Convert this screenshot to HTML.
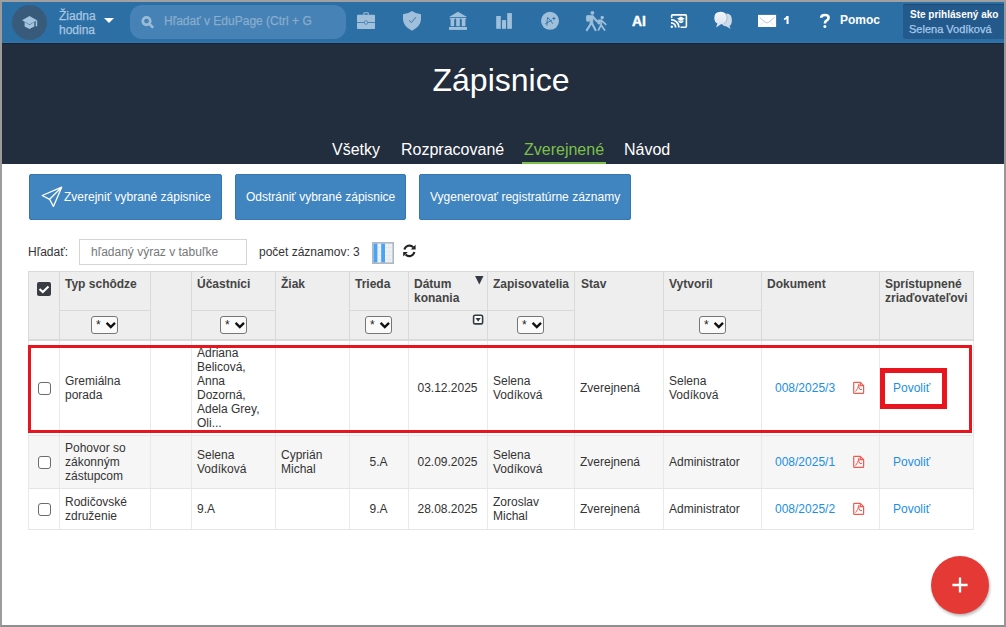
<!DOCTYPE html>
<html><head><meta charset="utf-8">
<style>
*{box-sizing:border-box;margin:0;padding:0}
html,body{width:1006px;height:627px;overflow:hidden;background:#fff}
body{font-family:"Liberation Sans",sans-serif;position:relative;color:#333}
.frame{position:absolute;left:0;top:0;width:1006px;height:627px;border:2px solid #a0a0a0;border-left-color:#9c9c9c;border-right-color:#979797;border-bottom-color:#8f8f8f;z-index:50;pointer-events:none}
.a{position:absolute}
#nav{left:2px;top:2px;width:1002px;height:41px;background:#2c6fa5}
#hdr{left:2px;top:43px;width:1002px;height:121px;background:#222d3d}
.navtxt{color:#a9c6e0;font-size:12px;line-height:14px;white-space:nowrap;-webkit-text-stroke:0.25px currentColor}
.title{left:-2px;width:1006px;top:60px;text-align:center;color:#fff;font-size:32px;line-height:40px}
.tab{top:140px;color:#fff;font-size:16px;line-height:20px;white-space:nowrap}
.btn{top:174px;height:46px;background:#4085c0;border:1px solid #3577b0;border-radius:2px;color:#fff;font-size:12px;line-height:44px;padding:0 10px;white-space:nowrap}
.t12{font-size:12px;line-height:14px;white-space:nowrap}
svg{position:absolute;overflow:visible}
/* table */
.hb{background:#eeeeee}
.vl{position:absolute;width:1px;background:#d9d9d9}
.hl{position:absolute;height:1px;background:#d9d9d9}
.vlb{position:absolute;width:1px;background:#e9e9e9}
.hlb{position:absolute;height:1px;background:#e6e6e6}
.th{position:absolute;font-size:12px;line-height:14px;font-weight:bold;color:#444;padding:5px 6px}
.sel{position:absolute;top:316px;width:27px;height:18px;border:1px solid #767676;border-radius:3px;background:#fafafa}
.sel i{position:absolute;left:4px;top:1px;font-style:normal;font-size:12px;line-height:14px;color:#222}
.td{position:absolute;font-size:12px;line-height:14px;color:#333;display:flex;align-items:center;padding:0 6px}
.td.c{justify-content:center}
.lnk{color:#1b8fe3}
.cb{position:absolute;left:38px;width:13px;height:13px;border:1.5px solid #6b6b6b;border-radius:3px;background:#fff}
</style></head><body>
<div class="frame"></div>

<!-- NAV -->
<div class="a" id="nav"></div>
<div class="a" style="left:12px;top:5px;width:35px;height:35px;border-radius:50%;background:#385b7b"></div>
<svg style="left:0;top:0" width="1006" height="43">
  <g fill="#a3c3de">
    <polygon points="22,20.3 29.5,16 37,20.3 29.5,24.4"/>
    <path d="M24.6,22.1 L29.5,25.1 L34.3,22.1 V26.4 L29.5,28.9 L24.6,26.4 Z"/>
    <rect x="35.7" y="20.3" width="1.5" height="6"/>
  </g>
</svg>
<div class="a navtxt" style="left:59px;top:9px">Žiadna<br>hodina</div>
<div class="a" style="left:104px;top:18px;width:0;height:0;border-left:5px solid transparent;border-right:5px solid transparent;border-top:5.5px solid #fff"></div>
<div class="a" style="left:130px;top:5px;width:216px;height:34px;border-radius:12px;background:#4682b6"></div>
<svg style="left:0;top:0" width="1006" height="43">
  <circle cx="146.5" cy="21.1" r="3.75" fill="none" stroke="#9bbbd7" stroke-width="2.7"/>
  <line x1="149.6" y1="24.2" x2="152.4" y2="27" stroke="#9bbbd7" stroke-width="2.5" stroke-linecap="round"/>
</svg>
<div class="a navtxt" style="left:164px;top:14px;color:#88adcd">Hľadať v EduPage (Ctrl + G</div>

<svg style="left:0;top:0" width="1006" height="43">
  <g fill="#9fbfdb">
    <!-- briefcase -->
    <path d="M363.3,14.8 V13.6 Q363.3,12.2 364.8,12.2 H367.4 Q368.9,12.2 368.9,13.6 V14.8 H367.7 V13.3 H364.5 V14.8 Z"/>
    <rect x="357" y="14.8" width="18" height="14.2" rx="0.8"/>
    <!-- shield -->
    <path d="M412,10.9 Q407.5,14 403,14.3 V19.5 Q403.5,26.5 412,30.8 Q420.5,26.5 421,19.5 V14.3 Q416.5,14 412,10.9 Z"/>
    <!-- bank -->
    <polygon points="458,11.8 467,16.9 449,16.9"/>
    <rect x="449.8" y="17.8" width="5.2" height="1.4"/><rect x="450.6" y="18.6" width="3.6" height="7.6"/>
    <rect x="455.4" y="17.8" width="5.2" height="1.4"/><rect x="456.2" y="18.6" width="3.6" height="7.6"/>
    <rect x="461" y="17.8" width="5.2" height="1.4"/><rect x="461.8" y="18.6" width="3.6" height="7.6"/>
    <rect x="449" y="27" width="18" height="2.9"/>
    <!-- bars -->
    <rect x="496.2" y="16" width="4.6" height="12.8"/>
    <rect x="502" y="20.1" width="4" height="8.7"/>
    <rect x="507.2" y="13.1" width="4.7" height="15.7"/>
    <!-- A+ -->
    <circle cx="550" cy="20.85" r="9"/>
  </g>
  <polyline points="409.1,20.3 411.4,22.5 415.9,17.2" fill="none" stroke="#3a78ab" stroke-width="1"/>
  <rect x="357" y="22" width="18" height="0.9" fill="#3f7cb0"/>
  <circle cx="366" cy="22.5" r="1.8" fill="#9fbfdb" stroke="#3a78ad" stroke-width="0.7"/>
  <g fill="none" stroke="#2c6fa5" stroke-width="0.9" stroke-linecap="round">
    <path d="M546.9,25.2 Q547,19 547.8,17.4 Q550,20 552.7,23.4"/>
    <path d="M545.6,23.6 L551.6,20.3"/>
    <path d="M553.9,17.3 V19.7 M552.7,18.5 H555.1"/>
  </g>
  <!-- walking -->
  <g fill="#9fbfdb" stroke="#9fbfdb" stroke-linecap="round" stroke-linejoin="round">
    <circle cx="592.4" cy="12.8" r="1.9" stroke="none"/>
    <rect x="586.1" y="14.9" width="3.9" height="6.8" rx="1.7" stroke="none"/>
    <polygon points="589.6,15.4 593.2,15.4 592.7,24.2 590.4,24.2" stroke-width="0.6"/>
    <path d="M590.9,23.8 L586.8,30.1 M592.2,23.8 L595.5,30.1 M592.9,16.8 L596.9,21.3" fill="none" stroke-width="2.1"/>
    <circle cx="602.2" cy="17.5" r="1.7" stroke="none"/>
    <rect x="597.3" y="19.4" width="2.9" height="5" rx="1.3" stroke="none"/>
    <polygon points="599.9,19.7 601.9,19.7 601.7,25.7 600.5,25.7" stroke-width="0.5"/>
    <path d="M600.8,25.5 L598.4,30.1 M601.4,25.5 L604.6,30.1 M601.6,20.7 L605.8,24.4" fill="none" stroke-width="1.7"/>
  </g>
  <!-- cast -->
  <g fill="none" stroke="#fff" stroke-width="1.6">
    <path d="M671.6,17.9 V15.9 Q671.6,14.9 672.6,14.9 H685.4 Q686.4,14.9 686.4,15.9 V26.3 Q686.4,27.2 685.4,27.2 H680.5"/>
  </g>
  <g fill="none" stroke="#fff" stroke-width="1.8">
    <path d="M671,22.9 A4.6,4.6 0 0 1 675.6,27.5"/>
    <path d="M671,19.6 A7.9,7.9 0 0 1 678.9,27.5"/>
  </g>
  <circle cx="671.8" cy="26.7" r="1.2" fill="#fff"/>
  <g fill="#fff">
    <polygon points="677.1,18.7 680.9,16.5 684.7,18.7 680.9,20.9"/>
    <path d="M678.5,20 L680.9,21.5 L683.3,20 V22.1 Q680.9,24.2 678.5,22.1 Z"/>
  </g>
  <!-- chat -->
  <defs>
    <linearGradient id="cg" x1="0" y1="0" x2="0" y2="1"><stop offset="0" stop-color="#f3f6fa"/><stop offset="1" stop-color="#d5e1ee"/></linearGradient>
  </defs>
  <path d="M726.5,13.6 Q732,14 731.9,20.2 Q731.8,24.8 729.4,25.9 L730.6,28.9 L726.6,26.4 Q722.5,26.2 721.6,23 Z" fill="#cddbe9"/>
  <path d="M720.6,11.8 Q726.9,11.8 726.9,18 Q726.9,23.7 721,24.2 L716.1,27.4 L717.4,23.6 Q714.3,22 714.3,18 Q714.3,11.8 720.6,11.8 Z" fill="url(#cg)"/>
  <path d="M725.6,13.9 Q727.3,15.6 727.1,18.6 Q726.9,22.8 723.5,24" fill="none" stroke="#9fb6cc" stroke-width="0.8"/>
  <!-- envelope -->
  <rect x="758" y="14.9" width="18.1" height="12.1" fill="#fff"/>
  <path d="M759.4,17.2 L765.3,22.3 Q767,23.6 768.7,22.3 L774.6,17.2" fill="none" stroke="#9fbcd6" stroke-width="0.8"/>
  <path d="M760.5,25.5 L763.8,21.3 M773.5,25.5 L770.2,21.3" fill="none" stroke="#d0dfeb" stroke-width="0.7"/>
</svg>
<div class="a" style="left:632px;top:13px;color:#fff;font-weight:bold;font-size:14px;line-height:16px;-webkit-text-stroke:0.4px #fff">AI</div>
<svg style="left:0;top:0" width="1006" height="43"><path d="M786.5,16 H788.6 V24.1 H786.5 V18.9 Q785.3,19.8 783.9,20.1 V18.4 Q785.8,17.7 786.5,16 Z" fill="#fff"/></svg>
<svg style="left:0;top:0" width="1006" height="43"><path d="M821.2,17.8 Q821.2,15 824.9,15 Q828.6,15 828.6,17.7 Q828.6,19.5 826.5,20.6 Q824.9,21.5 824.9,23.4" fill="none" stroke="#fff" stroke-width="2.6"/><circle cx="824.9" cy="26.6" r="1.5" fill="#fff"/></svg>
<div class="a" style="left:840px;top:13px;color:#fff;font-weight:bold;font-size:12px;line-height:14px">Pomoc</div>
<div class="a" style="left:903px;top:4px;width:101px;height:35px;background:#245a8b;border-radius:3px 0 0 3px;box-shadow:inset 0 1px 0 #1e4a73"></div>
<div class="a" style="left:910px;top:9px;color:#fff;font-weight:bold;font-size:10px;line-height:11px;white-space:nowrap">Ste prihlásený ako</div>
<div class="a" style="left:909px;top:23px;color:#a5c9ec;font-size:11px;line-height:12px;white-space:nowrap;-webkit-text-stroke:0.25px currentColor">Selena Vodíková</div>

<!-- HEADER -->
<div class="a" id="hdr"></div>
<div class="a" style="left:2px;top:42px;width:1002px;height:1px;background:#2f77b3"></div>
<div class="a" style="left:2px;top:43px;width:1002px;height:1px;background:#1b222d"></div>
<div class="a title">Zápisnice</div>
<div class="a tab" style="left:332px">Všetky</div>
<div class="a tab" style="left:401px">Rozpracované</div>
<div class="a tab" style="left:524px;color:#7cc04b">Zverejnené</div>
<div class="a" style="left:522px;top:162px;width:84px;height:2px;background:#7cc04b"></div>
<div class="a tab" style="left:624px">Návod</div>

<!-- BUTTONS -->
<div class="a btn" style="left:29px;width:193px;padding-left:34px">Zverejniť vybrané zápisnice</div>
<svg style="left:0;top:0" width="700" height="230">
  <path d="M61.7,187.2 L42.2,195.5 L49.6,199.3 Z M49.6,199.3 L53.4,206.4 L61.7,187.2" fill="none" stroke="#fff" stroke-width="1.3" stroke-linejoin="round"/>
</svg>
<div class="a btn" style="left:235px;width:171px">Odstrániť vybrané zápisnice</div>
<div class="a btn" style="left:419px;width:212px">Vygenerovať registratúrne záznamy</div>

<!-- SEARCH ROW -->
<div class="a t12" style="left:28px;top:245px">Hľadať:</div>
<div class="a" style="left:79px;top:239px;width:168px;height:26px;border:1px solid #d5d5d5"></div>
<div class="a t12" style="left:91px;top:245px;color:#777">hľadaný výraz v tabuľke</div>
<div class="a t12" style="left:259px;top:245px">počet záznamov: 3</div>
<svg style="left:0;top:0" width="700" height="270">
  <rect x="372.8" y="242.8" width="20.4" height="20.4" fill="#eef0f3" stroke="#aeb8c2" stroke-width="1.6"/>
  <g stroke="#dfe4ea" stroke-width="0.6"><line x1="389" y1="243.5" x2="389" y2="262.5"/><line x1="373.5" y1="247.5" x2="392.5" y2="247.5"/><line x1="373.5" y1="251.5" x2="392.5" y2="251.5"/><line x1="373.5" y1="255.5" x2="392.5" y2="255.5"/><line x1="373.5" y1="259.5" x2="392.5" y2="259.5"/></g>
  <rect x="373.6" y="243.6" width="3.8" height="18.8" fill="#4aa3f5"/>
  <rect x="381.2" y="243.6" width="3.8" height="18.8" fill="#4aa3f5"/>
  <g fill="none" stroke="#222" stroke-width="2.1">
    <path d="M404.4,249.6 A5.2,5.2 0 0 1 413.2,247.2"/>
    <path d="M414.4,252.1 A5.2,5.2 0 0 1 405.6,254.5"/>
  </g>
  <polygon points="415.6,244.8 415.6,249.6 410.8,249.6" fill="#222"/>
  <polygon points="403.2,252 403.2,256.6 407.8,252" fill="#222"/>
</svg>

<!-- TABLE -->
<div class="a hb" style="left:28px;top:271px;width:946px;height:70px"></div>
<div class="a" style="left:29px;top:436px;width:944px;height:52px;background:#f6f6f6"></div>
<!-- header lines -->
<div class="hl" style="left:28px;top:271px;width:946px"></div>
<div class="hl" style="left:28px;top:339px;width:946px;height:2px;background:#dadada"></div>
<div class="hl" style="left:59px;top:310px;width:91px"></div>
<div class="hl" style="left:191px;top:310px;width:84px"></div>
<div class="hl" style="left:349px;top:310px;width:225px"></div>
<div class="hl" style="left:663px;top:310px;width:98px"></div>
<div class="vl" style="left:28px;top:271px;height:70px"></div>
<div class="vl" style="left:59px;top:271px;height:70px"></div>
<div class="vl" style="left:150px;top:271px;height:70px"></div>
<div class="vl" style="left:191px;top:271px;height:70px"></div>
<div class="vl" style="left:275px;top:271px;height:70px"></div>
<div class="vl" style="left:349px;top:271px;height:70px"></div>
<div class="vl" style="left:408px;top:271px;height:70px"></div>
<div class="vl" style="left:487px;top:271px;height:70px"></div>
<div class="vl" style="left:574px;top:271px;height:70px"></div>
<div class="vl" style="left:663px;top:271px;height:70px"></div>
<div class="vl" style="left:761px;top:271px;height:70px"></div>
<div class="vl" style="left:879px;top:271px;height:70px"></div>
<div class="vl" style="left:973px;top:271px;height:70px"></div>
<!-- body lines -->
<div class="vlb" style="left:28px;top:341px;height:189px"></div>
<div class="vlb" style="left:59px;top:341px;height:189px"></div>
<div class="vlb" style="left:150px;top:341px;height:189px"></div>
<div class="vlb" style="left:191px;top:341px;height:189px"></div>
<div class="vlb" style="left:275px;top:341px;height:189px"></div>
<div class="vlb" style="left:349px;top:341px;height:189px"></div>
<div class="vlb" style="left:408px;top:341px;height:189px"></div>
<div class="vlb" style="left:487px;top:341px;height:189px"></div>
<div class="vlb" style="left:574px;top:341px;height:189px"></div>
<div class="vlb" style="left:663px;top:341px;height:189px"></div>
<div class="vlb" style="left:761px;top:341px;height:189px"></div>
<div class="vlb" style="left:879px;top:341px;height:189px"></div>
<div class="vlb" style="left:973px;top:341px;height:189px"></div>
<div class="hlb" style="left:28px;top:435px;width:946px"></div>
<div class="hlb" style="left:28px;top:488px;width:946px"></div>
<div class="hlb" style="left:28px;top:529px;width:946px"></div>

<!-- header content -->
<div class="a" style="left:37px;top:282px;width:14px;height:14px;border-radius:2px;background:#393c42"></div>
<svg style="left:0;top:0" width="60" height="300"><polyline points="39.5,288.9 42.8,292 48.5,286.4" fill="none" stroke="#fff" stroke-width="2.1"/></svg>
<div class="th" style="left:59px;top:272px">Typ schôdze</div>
<div class="th" style="left:191px;top:272px">Účastníci</div>
<div class="th" style="left:275px;top:272px">Žiak</div>
<div class="th" style="left:349px;top:272px">Trieda</div>
<div class="th" style="left:408px;top:272px">Dátum<br>konania</div>
<div class="th" style="left:487px;top:272px">Zapisovatelia</div>
<div class="th" style="left:574px;top:272px;padding-left:7px">Stav</div>
<div class="th" style="left:663px;top:272px">Vytvoril</div>
<div class="th" style="left:761px;top:272px">Dokument</div>
<div class="th" style="left:879px;top:272px">Sprístupnené<br>zriaďovateľovi</div>
<svg style="left:0;top:0" width="500" height="340">
  <polygon points="475.1,276 483.5,276 479.3,284.4" fill="#333a45"/>
  <rect x="473.6" y="315.3" width="9" height="8.6" rx="1.5" fill="#fff" stroke="#333a45" stroke-width="1.6"/>
  <polygon points="475.5,317.9 480.8,317.9 478.15,321.8" fill="#333a45"/>
</svg>
<div class="sel" style="left:91px"><i>*</i></div>
<div class="sel" style="left:220px"><i>*</i></div>
<div class="sel" style="left:365px"><i>*</i></div>
<div class="sel" style="left:517px"><i>*</i></div>
<div class="sel" style="left:699px"><i>*</i></div>
<svg style="left:0;top:0" width="760" height="340">
  <g fill="none" stroke="#111" stroke-width="2.4" stroke-linecap="butt">
    <polyline points="106.6,322.9 110.8,327.1 115,322.9"/>
    <polyline points="235.6,322.9 239.8,327.1 244,322.9"/>
    <polyline points="380.6,322.9 384.8,327.1 389,322.9"/>
    <polyline points="532.6,322.9 536.8,327.1 541,322.9"/>
    <polyline points="714.6,322.9 718.8,327.1 723,322.9"/>
  </g>
</svg>

<!-- ROW 1 -->
<div class="cb" style="top:382px"></div>
<div class="td" style="left:59px;top:341px;width:91px;height:94px">Gremiálna<br>porada</div>
<div class="td" style="left:191px;top:341px;width:84px;height:94px">Adriana<br>Belicová,<br>Anna<br>Dozorná,<br>Adela Grey,<br>Oli...</div>
<div class="td c" style="left:408px;top:341px;width:79px;height:94px">03.12.2025</div>
<div class="td" style="left:487px;top:341px;width:87px;height:94px">Selena<br>Vodíková</div>
<div class="td" style="left:574px;top:341px;width:89px;height:94px">Zverejnená</div>
<div class="td" style="left:663px;top:341px;width:98px;height:94px">Selena<br>Vodíková</div>
<div class="td lnk" style="left:761px;top:341px;width:118px;height:94px;padding-left:14px">008/2025/3</div>
<div class="td lnk" style="left:879px;top:341px;width:94px;height:94px;padding-left:14px">Povoliť</div>

<!-- ROW 2 -->
<div class="cb" style="top:456px"></div>
<div class="td" style="left:59px;top:436px;width:91px;height:52px">Pohovor so<br>zákonným<br>zástupcom</div>
<div class="td" style="left:191px;top:436px;width:84px;height:52px">Selena<br>Vodíková</div>
<div class="td" style="left:275px;top:436px;width:74px;height:52px">Cyprián<br>Michal</div>
<div class="td c" style="left:349px;top:436px;width:59px;height:52px">5.A</div>
<div class="td c" style="left:408px;top:436px;width:79px;height:52px">02.09.2025</div>
<div class="td" style="left:487px;top:436px;width:87px;height:52px">Selena<br>Vodíková</div>
<div class="td" style="left:574px;top:436px;width:89px;height:52px">Zverejnená</div>
<div class="td" style="left:663px;top:436px;width:98px;height:52px">Administrator</div>
<div class="td lnk" style="left:761px;top:436px;width:118px;height:52px;padding-left:14px">008/2025/1</div>
<div class="td lnk" style="left:879px;top:436px;width:94px;height:52px;padding-left:14px">Povoliť</div>

<!-- ROW 3 -->
<div class="cb" style="top:503px"></div>
<div class="td" style="left:59px;top:489px;width:91px;height:40px">Rodičovské<br>združenie</div>
<div class="td" style="left:191px;top:489px;width:84px;height:40px">9.A</div>
<div class="td c" style="left:349px;top:489px;width:59px;height:40px">9.A</div>
<div class="td c" style="left:408px;top:489px;width:79px;height:40px">28.08.2025</div>
<div class="td" style="left:487px;top:489px;width:87px;height:40px">Zoroslav<br>Michal</div>
<div class="td" style="left:574px;top:489px;width:89px;height:40px">Zverejnená</div>
<div class="td" style="left:663px;top:489px;width:98px;height:40px">Administrator</div>
<div class="td lnk" style="left:761px;top:489px;width:118px;height:40px;padding-left:14px">008/2025/2</div>
<div class="td lnk" style="left:879px;top:489px;width:94px;height:40px;padding-left:14px">Povoliť</div>

<!-- PDF icons -->
<svg style="left:0;top:0" width="1006" height="530">
  <g fill="none" stroke="#ef5b50" stroke-width="1.2" stroke-linejoin="round">
    <path d="M853.7,383 Q853.7,382.4 854.3,382.4 H860.3 L863.6,385.7 V392.7 Q863.6,393.3 863,393.3 H854.3 Q853.7,393.3 853.7,392.7 Z"/>
    <path d="M860.3,382.4 V385.7 H863.6"/>
    <path d="M855.5,391.6 Q858.3,388.6 858.8,384.4 Q858.8,388.6 859.8,389.4 H862" stroke-width="1"/>
  </g>
  <g transform="translate(0,74)"><g fill="none" stroke="#ef5b50" stroke-width="1.2" stroke-linejoin="round">
    <path d="M853.7,383 Q853.7,382.4 854.3,382.4 H860.3 L863.6,385.7 V392.7 Q863.6,393.3 863,393.3 H854.3 Q853.7,393.3 853.7,392.7 Z"/>
    <path d="M860.3,382.4 V385.7 H863.6"/>
    <path d="M855.5,391.6 Q858.3,388.6 858.8,384.4 Q858.8,388.6 859.8,389.4 H862" stroke-width="1"/>
  </g></g>
  <g transform="translate(0,121)"><g fill="none" stroke="#ef5b50" stroke-width="1.2" stroke-linejoin="round">
    <path d="M853.7,383 Q853.7,382.4 854.3,382.4 H860.3 L863.6,385.7 V392.7 Q863.6,393.3 863,393.3 H854.3 Q853.7,393.3 853.7,392.7 Z"/>
    <path d="M860.3,382.4 V385.7 H863.6"/>
    <path d="M855.5,391.6 Q858.3,388.6 858.8,384.4 Q858.8,388.6 859.8,389.4 H862" stroke-width="1"/>
  </g></g>
</svg>

<!-- RED ANNOTATIONS -->
<div class="a" style="left:28px;top:345px;width:944px;height:88px;border:3px solid #e8141e"></div>
<div class="a" style="left:880px;top:368px;width:67px;height:41px;border:5px solid #e8141e"></div>

<!-- FAB -->
<div class="a" style="left:931px;top:556px;width:58px;height:58px;border-radius:50%;background:#e53935;box-shadow:1px 2px 3px rgba(0,0,0,.28)"></div>
<svg style="left:0;top:0" width="1006" height="627"><path d="M952.4,585 H967.6 M960,577.5 V592.5" stroke="#fff" stroke-width="2.3"/></svg>
</body></html>
